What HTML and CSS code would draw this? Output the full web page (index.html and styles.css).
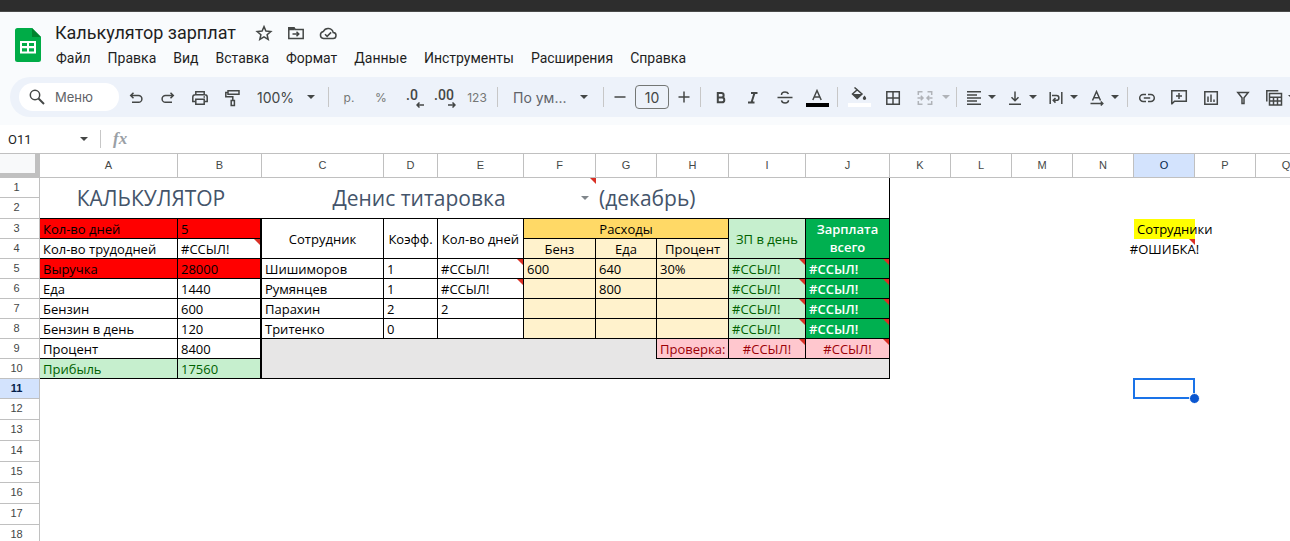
FILE: index.html
```html
<!DOCTYPE html>
<html lang="ru">
<head>
<meta charset="utf-8">
<title>Калькулятор зарплат</title>
<link rel="stylesheet" href="styles.css">
</head>
<body>
<div class="window-strip"></div>
<header class="header">
  <div class="doc">
    <svg class="logo" width="26" height="34" viewBox="0 0 26 34"><path d="M2.500 0H17l9 9v22.500a2.500 2.500 0 0 1-2.500 2.500h-21A2.500 2.500 0 0 1 0 31.500v-29A2.500 2.500 0 0 1 2.500 0z" fill="#00ac47"/><path d="M17 0l9 9h-9z" fill="#00832d"/><path d="M5 13h16v12.500H5zM7 15v3h5v-3zm7 0v3h5v-3zm-7 5.200v3.200h5v-3.200zm7 0v3.200h5v-3.200z" fill="#fff" fill-rule="evenodd"/></svg>
    <div class="doc-info">
      <div class="title-row">
        <h1 class="title">Калькулятор зарплат</h1>
        <button class="title-btn" aria-label="Пометить"><svg class="icon" viewBox="0 0 20 20"><path d="M10 3.600l1.900 4.500 4.900.4-3.700 3.200 1.100 4.800L10 13.900l-4.200 2.600 1.100-4.800-3.700-3.200 4.900-.4z"/></svg></button>
        <button class="title-btn" aria-label="Переместить"><svg class="icon" viewBox="0 0 20 20"><path d="M2.800 4.800h5l1.600 1.700h7.800v9H2.800zM6.500 11h6M10.500 8.700l2.300 2.300-2.300 2.300"/><path d="M3 5h5v1.500H3z"/></svg></button>
        <button class="title-btn" aria-label="Сохранено"><svg class="icon" viewBox="0 0 20 20"><path d="M5.500 15.500h9.300a3 3 0 0 0 .4-6A5.200 5.200 0 0 0 5.400 8.400a3.600 3.600 0 0 0 .1 7.100zM7 11.300l2.100 2.100 4-4"/></svg></button>
      </div>
      <nav class="menu">
        <button>Файл</button><button>Правка</button><button>Вид</button><button>Вставка</button><button>Формат</button><button>Данные</button><button>Инструменты</button><button>Расширения</button><button>Справка</button>
      </nav>
    </div>
  </div>
  <div class="toolbar">
    <button class="search"><svg class="icon" viewBox="0 0 20 20"><circle cx="8" cy="8" r="4.700"/><path d="M11.500 11.500l5.500 5.500" stroke-width="2"/></svg>Меню</button>
    <button class="tool" aria-label="Отменить"><svg class="icon" viewBox="0 0 20 20"><path d="M7.500 5.700L4.700 8.500l2.800 2.800M5 8.500h7.500a3.400 3.400 0 0 1 0 6.800H6"/></svg></button>
    <button class="tool" aria-label="Повторить"><svg class="icon" viewBox="0 0 20 20"><path d="M12.500 5.700l2.800 2.800-2.800 2.800M15 8.500H7.500a3.400 3.400 0 0 0 0 6.800H14"/></svg></button>
    <button class="tool" aria-label="Печать"><svg class="icon" viewBox="0 0 20 20"><path d="M5.800 7.500V4.700h8.400v2.800M5.500 14.500H2.800V10a2.300 2.300 0 0 1 2.300-2.300h9.800A2.300 2.300 0 0 1 17.200 10v4.500h-2.700"/><path d="M5.800 12.300h8.400v5H5.800z"/><path d="M13.500 10h1.500"/></svg></button>
    <button class="tool" aria-label="Копировать форматирование"><svg class="icon" viewBox="0 0 20 20"><path d="M6 3.800h11v3.400H6zM6 5.500H3.800v4.300h7v3.400M9.200 13.400h3.200v5H9.200z"/></svg></button>
    <button class="tool zoom">100%<i class="caret"></i></button>
    <span class="sep"></span>
    <button class="tool small">р.</button>
    <button class="tool small">%</button>
    <button class="tool decimal">.0<svg width="8" height="6" viewBox="0 0 8 6"><path d="M8 3H2M3.500.5L1 3l2.500 2.500"/></svg></button>
    <button class="tool decimal">.00<svg width="8" height="6" viewBox="0 0 8 6"><path d="M0 3h6M4.500.5L7 3 4.500 5.500"/></svg></button>
    <button class="tool small">123</button>
    <span class="sep"></span>
    <button class="tool font">По ум...<i class="caret"></i></button>
    <span class="sep"></span>
    <button class="tool step" aria-label="Уменьшить"><svg class="icon" viewBox="0 0 20 20"><path d="M4.500 10h11"/></svg></button>
    <input class="size" value="10" aria-label="Размер шрифта">
    <button class="tool step" aria-label="Увеличить"><svg class="icon" viewBox="0 0 20 20"><path d="M4.500 10h11M10 4.500v11"/></svg></button>
    <span class="sep"></span>
    <button class="tool" aria-label="Полужирный"><svg class="icon heavy" viewBox="0 0 20 20"><path d="M6.800 6h3.600a2.200 2.200 0 0 1 0 4.500H6.800zM6.800 10.500h4.100a2.400 2.400 0 0 1 0 4.800H6.800z"/></svg></button>
    <button class="tool" aria-label="Курсив"><svg class="icon heavy" viewBox="0 0 20 20"><path d="M8 6h6.500M5 15.500h6.500M11.500 6l-3 9.500"/></svg></button>
    <button class="tool" aria-label="Зачеркнутый"><svg class="icon" viewBox="0 0 20 20"><path d="M2.500 10.500h15M6.500 8c0-1.800 1.400-3 3.500-3 1.800 0 3 .8 3.500 2M6.500 13.300c.3 1.700 1.700 2.700 3.600 2.700 2 0 3.400-1 3.400-2.700"/></svg></button>
    <button class="tool swatch" aria-label="Цвет текста"><svg class="icon" viewBox="0 0 20 20"><path d="M5.800 13L10 3.500l4.200 9.500M7.200 10h5.600"/></svg><b class="black"></b></button>
    <span class="sep"></span>
    <button class="tool wide swatch" aria-label="Цвет заливки"><svg class="icon" viewBox="0 0 20 20"><path d="M5.500.5L13 7l-4.800 4.500L3.500 7l4.700-4.300z"/><path class="solid" d="M3.500 7H13l-4.800 4.700zM15.500 8.500c1.200 1.500 1.700 2.100 1.700 2.800a1.700 1.700 0 0 1-3.400 0c0-.7.500-1.300 1.700-2.800z"/></svg><b class="white"></b></button>
    <button class="tool wide" aria-label="Границы"><svg class="icon" viewBox="0 0 20 20"><path d="M3.800 4.800h12.500v12.500H3.800zM10 5v12M4 11h12"/></svg></button>
    <button class="tool drop merge" disabled aria-label="Объединить"><svg class="icon" viewBox="0 0 20 20"><path d="M7.500 4.800H3.300V8M12.500 4.800h4.200V8M7.500 17.200H3.300V14M12.500 17.200h4.200V14M2.500 11H8M17.500 11H12M5.800 8.700L8 11l-2.200 2.300M14.200 8.700L12 11l2.200 2.300"/></svg><i class="caret"></i></button>
    <span class="sep"></span>
    <button class="tool drop" aria-label="Горизонтально"><svg class="icon" viewBox="0 0 20 20"><path d="M3 4.800h14M3 7.900h10M3 11h14M3 14.100h10M3 17.200h14"/></svg><i class="caret"></i></button>
    <button class="tool drop" aria-label="Вертикально"><svg class="icon" viewBox="0 0 20 20"><path d="M4 17.200h12M10 4.500v9M6.500 10.200l3.500 3.500 3.500-3.500"/></svg><i class="caret"></i></button>
    <button class="tool drop" aria-label="Перенос"><svg class="icon" viewBox="0 0 20 20"><path d="M4.200 5v12M15.800 5v12M6 8.500h4.500a2.400 2.400 0 0 1 0 4.800H7.500M9.500 11l-2.300 2.300 2.300 2.300"/></svg><i class="caret"></i></button>
    <button class="tool drop" aria-label="Поворот"><svg class="icon" viewBox="0 0 20 20"><path d="M5.500 13.500L9.500 4.500l4 9M6.800 10.800h5.400M3.500 16.500h12M13.800 14.500l2 2-2 2"/></svg><i class="caret"></i></button>
    <span class="sep tight"></span>
    <button class="tool" aria-label="Ссылка"><svg class="icon" viewBox="0 0 20 20"><path d="M9 7.500H6.200a3.500 3.500 0 0 0 0 7H9M11 7.500h2.800a3.500 3.500 0 0 1 0 7H11M6.800 11h6.400"/></svg></button>
    <button class="tool" aria-label="Комментарий"><svg class="icon" viewBox="0 0 20 20"><path d="M2.800 17.500V3.800h14.500v10.500H5.500L2.800 17M10 6v6M7 9h6"/></svg></button>
    <button class="tool" aria-label="Диаграмма"><svg class="icon" viewBox="0 0 20 20"><path d="M3.800 4.800h12.500v12.500H3.800zM7 9.500V15M10 7.500V15M13 12.500V15"/></svg></button>
    <button class="tool" aria-label="Фильтр"><svg class="icon" viewBox="0 0 20 20"><path d="M4.800 5.500h10.400l-4.200 5.300v5.700H9v-5.700z"/></svg></button>
    <button class="tool drop views" aria-label="Представления"><svg class="icon" viewBox="0 0 20 20"><path d="M2.800 14.500V3.800h11.500M5.500 6.500h12v11.500h-12zM5.500 10.200h12M5.500 14h12M9.500 10.200V18M13.500 10.200V18"/></svg><i class="caret"></i></button>
  </div>
</header>
<div class="formula-bar">
  <input class="name-box" value="O11" aria-label="Поле имени"><i class="caret"></i>
  <span class="fx">fx</span>
  <input class="formula" aria-label="Формула">
</div>
<main class="grid">
<table class="sheet">
  <colgroup><col class="w40"><col class="w138"><col class="w84"><col class="w122"><col class="w54"><col class="w86"><col class="w72"><col class="w61"><col class="w72"><col class="w77"><col class="w84"><col class="w61" span="7"></colgroup>
  <thead><tr><th class="corner"></th><th>A</th><th>B</th><th>C</th><th>D</th><th>E</th><th>F</th><th>G</th><th>H</th><th>I</th><th>J</th><th>K</th><th>L</th><th>M</th><th>N</th><th class="active">O</th><th>P</th><th>Q</th></tr></thead>
  <tbody>
  <tr><th>1</th><td class="big line-b center" colspan="2" rowspan="2">КАЛЬКУЛЯТОР</td><td class="big line-b note" colspan="4" rowspan="2"><div class="picker"><span>Денис титаровка</span><i class="caret"></i></div></td><td class="big box" colspan="4" rowspan="2">(декабрь)</td></tr>
  <tr class="tall"><th>2</th></tr>
  <tr><th>3</th><td class="box red">Кол-во дней</td><td class="box red thick">5</td><td class="box center" rowspan="2">Сотрудник</td><td class="box center" rowspan="2">Коэфф.</td><td class="box center" rowspan="2">Кол-во дней</td><td class="box gold center" colspan="3">Расходы</td><td class="box mint center" rowspan="2">ЗП в день</td><td class="box green center wrap" rowspan="2">Зарплата всего</td><td colspan="4"></td><td class="yellow">Сотрудники</td></tr>
  <tr><th>4</th><td class="box">Кол-во трудодней</td><td class="box thick note">#ССЫЛ!</td><td class="box cream center">Бенз</td><td class="box cream center">Еда</td><td class="box cream center">Процент</td><td colspan="4"></td><td class="note"><div class="spill">#ОШИБКА!</div></td></tr>
  <tr><th>5</th><td class="box red">Выручка</td><td class="box red thick">28000</td><td class="box">Шишиморов</td><td class="box">1</td><td class="box note">#ССЫЛ!</td><td class="box cream">600</td><td class="box cream">640</td><td class="box cream">30%</td><td class="box mint note">#ССЫЛ!</td><td class="box green note">#ССЫЛ!</td></tr>
  <tr><th>6</th><td class="box">Еда</td><td class="box thick">1440</td><td class="box">Румянцев</td><td class="box">1</td><td class="box note">#ССЫЛ!</td><td class="box cream"></td><td class="box cream">800</td><td class="box cream"></td><td class="box mint note">#ССЫЛ!</td><td class="box green note">#ССЫЛ!</td></tr>
  <tr><th>7</th><td class="box">Бензин</td><td class="box thick">600</td><td class="box">Парахин</td><td class="box">2</td><td class="box">2</td><td class="box cream"></td><td class="box cream"></td><td class="box cream"></td><td class="box mint note">#ССЫЛ!</td><td class="box green note">#ССЫЛ!</td></tr>
  <tr><th>8</th><td class="box">Бензин в день</td><td class="box thick">120</td><td class="box">Тритенко</td><td class="box">0</td><td class="box"></td><td class="box cream"></td><td class="box cream"></td><td class="box cream"></td><td class="box mint note">#ССЫЛ!</td><td class="box green note">#ССЫЛ!</td></tr>
  <tr><th>9</th><td class="box">Процент</td><td class="box thick">8400</td><td class="grey line-r" colspan="5"></td><td class="box pink">Проверка:</td><td class="box pink center note">#ССЫЛ!</td><td class="box pink center note">#ССЫЛ!</td></tr>
  <tr><th>10</th><td class="box mint">Прибыль</td><td class="box mint thick">17560</td><td class="box grey" colspan="8"></td></tr>
  <tr><th class="active">11</th><td colspan="14"></td><td class="selected"></td></tr>
  <tr class="tall"><th>12</th></tr>
  <tr class="tall"><th>13</th></tr>
  <tr class="tall"><th>14</th></tr>
  <tr class="tall"><th>15</th></tr>
  <tr class="tall"><th>16</th></tr>
  <tr class="tall"><th>17</th></tr>
  <tr class="tall"><th>18</th></tr>
  </tbody>
</table>
</main>
</body>
</html>
```
FILE: styles.css
```css
* { box-sizing: border-box; }
body {
  margin: 0;
  height: 100vh;
  overflow: hidden;
  background: #fff;
  color: #1f1f1f;
  font-family: Inter, "Liberation Sans", sans-serif;
}
button, input {
  font: inherit;
  color: inherit;
  border: 0;
  padding: 0;
  background: none;
}
.window-strip { height: 12px; background: #2d2d2d; border-bottom: 1px solid #4a4a4a; }
.header { background: #f9fbfd; padding-bottom: 8px; }

.doc { display: flex; gap: 14px; padding: 10px 15px 7px; }
.logo { margin-top: 6px; flex: none; }
.title-row { display: flex; align-items: center; height: 22px; }
.title { margin: 0 12px 0 0; font-family: Roboto, sans-serif; font-size: 18px; font-weight: 400; line-height: 22px; white-space: nowrap; }
.title-btn { width: 32px; height: 22px; display: grid; place-items: center; color: #444746; }
.menu { display: flex; gap: 17px; height: 26px; padding: 1px 1px 0; font-family: Roboto, sans-serif; font-size: 14px; }

.icon { width: 20px; height: 20px; flex: none; fill: none; stroke: currentColor; stroke-width: 1.5; }
.icon.heavy { stroke-width: 2; }
.icon .solid { fill: currentColor; stroke: none; }
.caret { flex: none; border: 4px solid transparent; border-top-color: currentColor; border-bottom: 0; }

.toolbar {
  display: flex;
  align-items: center;
  height: 40px;
  margin-left: 10px;
  padding-left: 9px;
  overflow: hidden;
  border-radius: 20px 0 0 20px;
  background: #edf2fa;
  color: #444746;
}
.toolbar > * { flex: none; }
.search {
  display: flex;
  align-items: center;
  gap: 8px;
  width: 100px;
  height: 28px;
  margin-right: 1px;
  padding-left: 8px;
  border-radius: 14px;
  background: #fff;
  font-size: 13px;
  color: #5f6368;
}
.search .icon { color: #444746; }
.tool { display: flex; align-items: center; justify-content: center; width: 32px; height: 32px; font-size: 14px; }
.zoom { width: 76px; justify-content: space-between; padding: 0 9px; }
.small { font-size: 12px; color: #747775; }
.decimal { position: relative; font-family: Roboto, sans-serif; font-size: 14px; font-weight: 500; padding: 0 2px 5px 0; }
.decimal svg { position: absolute; right: 5px; bottom: 5px; fill: none; stroke: currentColor; stroke-width: 1.5; }
.sep { width: 1px; height: 20px; margin: 0 4px; background: #c7c7c7; }
.sep.tight { margin: 0 3px 0 2px; }
.font { width: 97px; justify-content: space-between; padding: 0 11px; color: #5f6368; }
.font .caret { color: #444746; }
.step { width: 24px; }
.size { width: 34px; height: 24px; margin: 0 3px; border: 1px solid #747775; border-radius: 4px; text-align: center; font-size: 14px; }
.swatch { flex-direction: column; justify-content: flex-start; padding-top: 6px; }
.swatch b { width: 23px; height: 4px; margin-top: -4px; }
.black { background: #000; }
.white { background: #fff; }
.wide { width: 34px; }
.drop { width: 41px; justify-content: flex-start; padding-left: 3px; gap: 4px; }
.merge { width: 42px; padding-left: 5px; gap: 7px; color: #b0b3b8; }
.views { padding-left: 5px; }

.formula-bar { display: flex; align-items: center; height: 28px; padding-left: 8px; }
.name-box { width: 72px; font-family: Roboto, sans-serif; font-size: 13px; }
.formula-bar .caret { color: #444746; margin-right: 12px; }
.fx { padding-left: 12px; border-left: 1px solid #c7c7c7; font: italic 700 17px/18px "Liberation Serif", serif; color: #9aa0a6; }
.formula { flex: 1; }

.grid { overflow: hidden; }
.sheet {
  table-layout: fixed;
  width: 1317px;
  border-collapse: separate;
  border-spacing: 0;
  font-family: "Open Sans", sans-serif;
  font-size: 13px;
  line-height: 16px;
  color: #000;
}
.w40 { width: 40px; }
.w54 { width: 54px; }
.w61 { width: 61px; }
.w72 { width: 72px; }
.w77 { width: 77px; }
.w84 { width: 84px; }
.w86 { width: 86px; }
.w122 { width: 122px; }
.w138 { width: 138px; }
.sheet th {
  padding: 0 6px 2px 0;
  border: solid #c0c0c0;
  border-width: 0 1px 1px 0;
  font-family: "Liberation Sans", sans-serif;
  font-size: 11px;
  font-weight: 400;
  color: #444746;
}
.sheet thead th { height: 25px; padding: 0 0 2px; border-top-width: 1px; }
.sheet thead .corner { border-width: 1px 5px 5px 0; background: #f8f9fa; }
.sheet th.active { background: #d3e3fd; color: #041e49; }
.sheet tbody .active { font-weight: 700; }
.sheet tbody tr { height: 20px; }
.sheet tbody .tall { height: 21px; }
.sheet td { position: relative; padding: 0 3px; white-space: nowrap; }
.sheet .center { text-align: center; padding: 0; }
.sheet .wrap { white-space: normal; padding: 0 10px 2px; line-height: 18px; }
.box { border: solid #000; border-width: 0 1px 1px 0; }
.thick { border-right-width: 2px; }
.line-b { border-bottom: 1px solid #000; }
.line-r { border-right: 1px solid #000; }
.big { font-size: 21px; line-height: 28px; color: #44546a; }
.picker { display: flex; align-items: center; justify-content: center; }
.picker span { flex: 1; padding-right: 8px; text-align: center; }
.picker .caret { color: #80868b; margin-right: 4px; }
.red { background: #f00; }
.mint { background: #c6efce; color: #006100; }
.green { background: #00b050; color: #fff; font-weight: 600; }
.gold { background: #ffd966; }
.cream { background: #fff2cc; }
.pink { background: #ffc7ce; color: #9c0006; }
.grey { background: #e7e6e6; }
.yellow { background: #ff0; }
.spill { display: flex; justify-content: center; }
.note::after {
  content: "";
  position: absolute;
  top: 0;
  right: 0;
  border: 3px solid #d93025;
  border-left-color: transparent;
  border-bottom-color: transparent;
}
.selected::before { content: ""; position: absolute; inset: -1px 0 0 -1px; border: 2px solid #1a73e8; }
.selected::after { content: ""; position: absolute; right: -5px; bottom: -5px; width: 9px; height: 9px; border-radius: 50%; background: #0b57d0; border: 1px solid #fff; }
```
